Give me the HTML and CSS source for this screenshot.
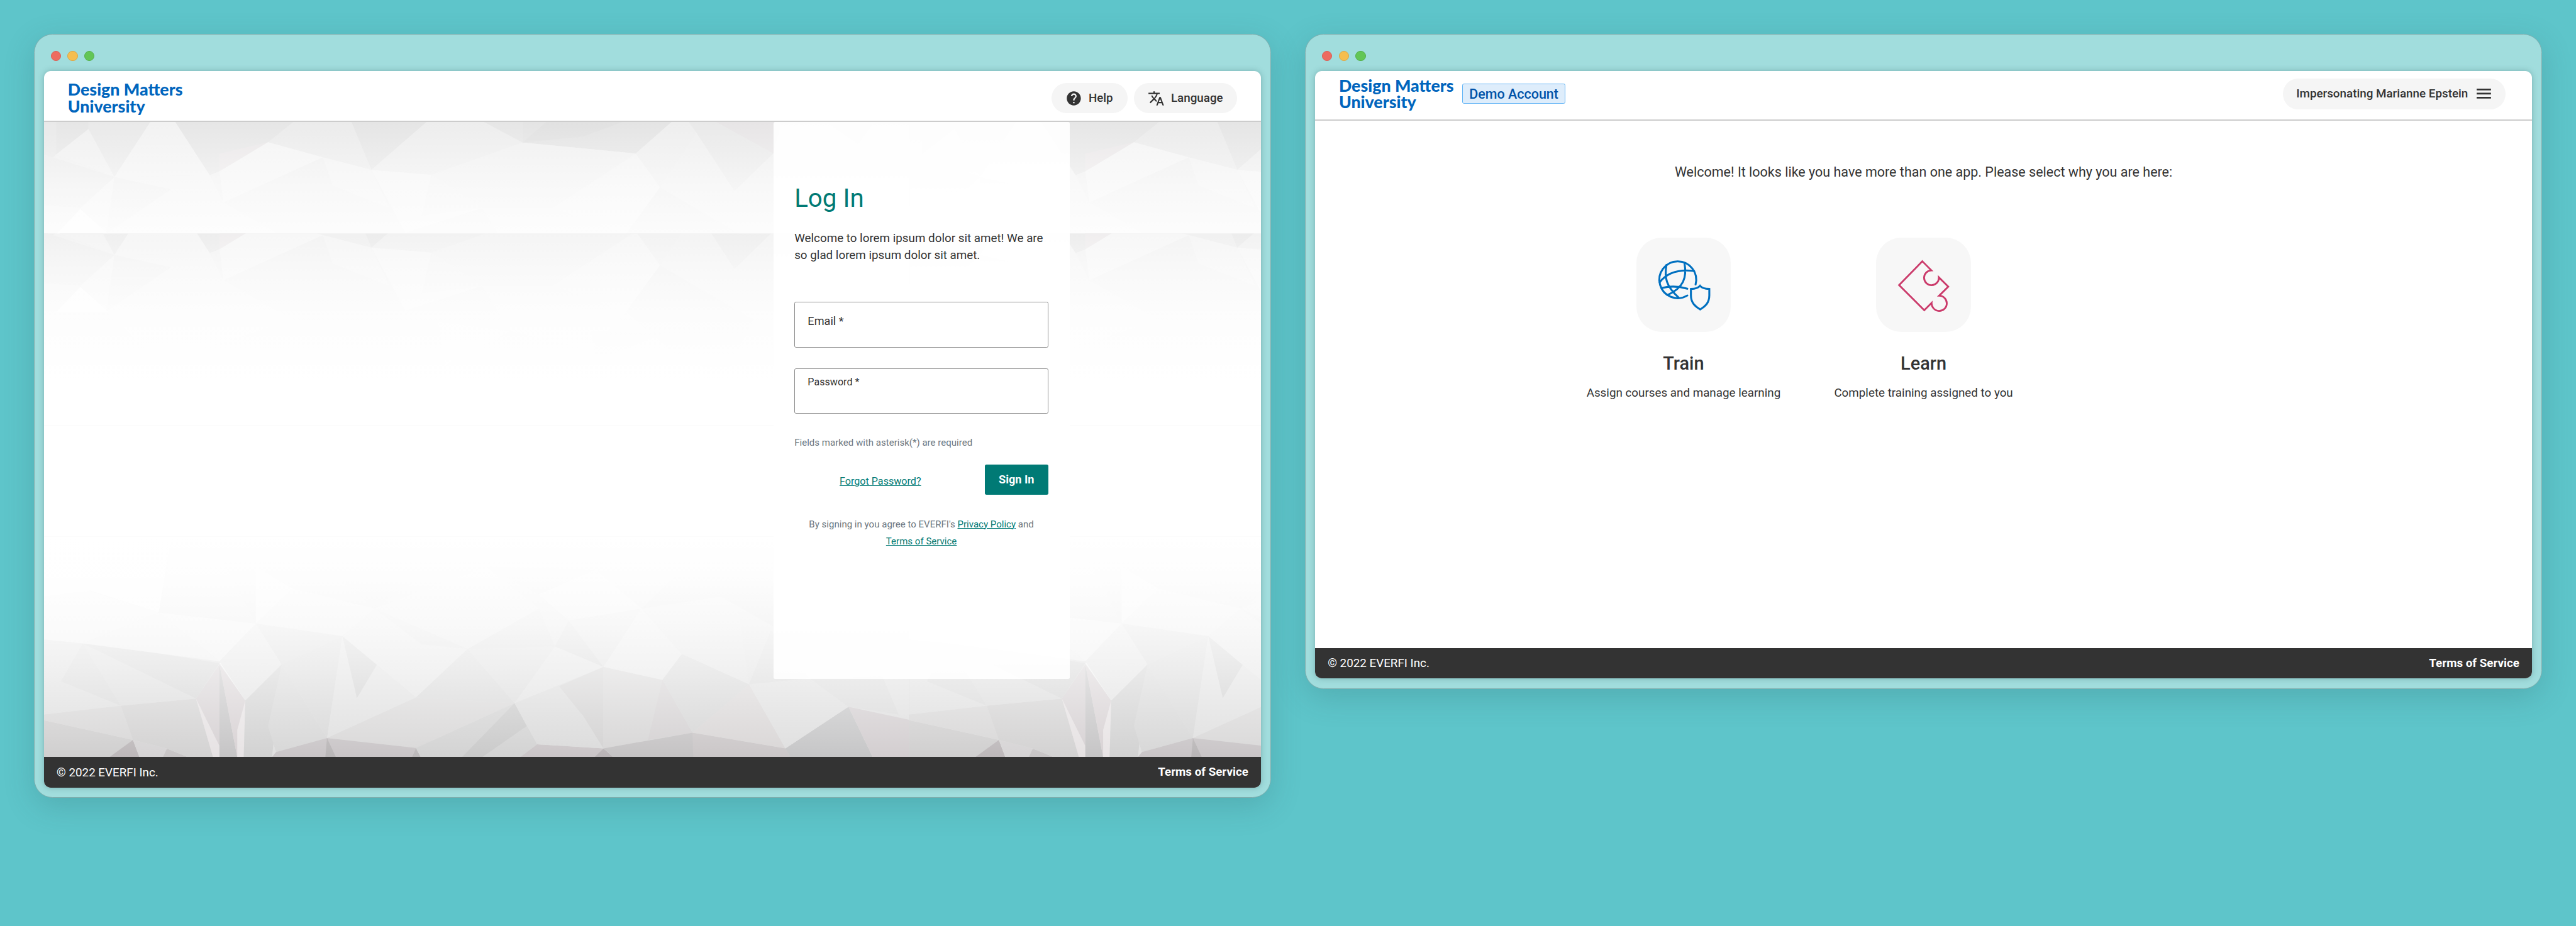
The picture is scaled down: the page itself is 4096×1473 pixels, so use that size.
FILE: index.html
```html
<!DOCTYPE html>
<html lang="en">
<head>
<meta charset="utf-8">
<title>Design Matters University</title>
<link rel="stylesheet" href="styles.css">
</head>
<body>
<div class="desk">
  <section class="window">
    <div class="dots"><i class="dot red"></i><i class="dot amber"></i><i class="dot green"></i></div>
    <div class="page page-login">
      <header class="header">
        <div class="logo">Design Matters<br>University</div>
        <nav class="actions">
          <a class="pill pill-help">
            <svg class="icon" viewBox="0 0 24 24"><path fill="#333" d="M12 2C6.48 2 2 6.48 2 12s4.480 10 10 10 10-4.480 10-10S17.520 2 12 2zm1 17h-2v-2h2v2zm2.070-7.750l-.9.920C13.450 12.900 13 13.500 13 15h-2v-.5c0-1.100.450-2.100 1.170-2.830l1.240-1.260c.370-.360.590-.860.590-1.410 0-1.100-.9-2-2-2s-2 .9-2 2H8c0-2.210 1.790-4 4-4s4 1.790 4 4c0 .880-.360 1.680-.930 2.250z"/></svg>
            <span>Help</span>
          </a>
          <a class="pill pill-lang">
            <svg class="icon" viewBox="0 0 24 24"><path fill="#333" d="M12.870 15.070l-2.540-2.510.030-.030c1.740-1.940 2.980-4.170 3.710-6.530H17V4h-7V2H8v2H1v1.990h11.170C11.500 7.920 10.440 9.750 9 11.350 8.070 10.320 7.300 9.190 6.690 8h-2c.730 1.630 1.730 3.170 2.980 4.560l-5.090 5.020L4 19l5-5 3.110 3.110.760-2.040zM18.500 10h-2L12 22h2l1.120-3h4.750L21 22h2l-4.500-12zm-2.620 7l1.620-4.330L19.120 17h-3.240z"/></svg>
            <span>Language</span>
          </a>
        </nav>
      </header>
      <main class="stage">
        <svg class="backdrop" viewBox="0 0 2880 1504" preserveAspectRatio="none">
          <defs>
            <linearGradient id="fadeTop" gradientUnits="userSpaceOnUse" x1="0" y1="60" x2="0" y2="1250">
              <stop offset="0" stop-color="#fff" stop-opacity="0"/>
              <stop offset=".16" stop-color="#fff" stop-opacity=".3"/>
              <stop offset=".3" stop-color="#fff" stop-opacity=".58"/>
              <stop offset=".5" stop-color="#fff" stop-opacity=".85"/>
              <stop offset=".8" stop-color="#fff" stop-opacity="1"/>
            </linearGradient>
            <linearGradient id="fadeBottom" gradientUnits="userSpaceOnUse" x1="0" y1="150" x2="0" y2="1254">
              <stop offset="0" stop-color="#fff" stop-opacity="1"/>
              <stop offset=".2" stop-color="#fff" stop-opacity=".94"/>
              <stop offset=".4" stop-color="#fff" stop-opacity=".78"/>
              <stop offset=".6" stop-color="#fff" stop-opacity=".54"/>
              <stop offset=".8" stop-color="#fff" stop-opacity=".26"/>
              <stop offset="1" stop-color="#fff" stop-opacity="0"/>
            </linearGradient>
            <clipPath id="clipUpper"><rect x="0" y="0" width="2000" height="656"/></clipPath>
            <clipPath id="clipLower"><rect x="0" y="243" width="2000" height="1100"/></clipPath>
            <g id="topTile">
              <rect x="23" y="60" width="1072" height="1200" fill="#f0f0f0"/>
              <path fill="#e9e9e9" d="M23 60H155L110 355 38 235 23 300z"/>
              <path fill="#e5e5e5" d="M38 60H78V100L38 235z"/>
              <path fill="#f2f2f2" d="M78 100L110 355 38 235z"/>
              <path fill="#f4f4f4" d="M155 60H185L228 345 110 355z"/>
              <path fill="#e4e4e4" d="M185 60H403L300 170 240 325 228 345z"/>
              <path fill="#eae6e7" d="M240 230L300 170 240 325z"/>
              <path fill="#ebebeb" d="M332 60H403L428 317 368 250 300 170z"/>
              <path fill="#e3e3e3" d="M403 60H497L428 317z"/>
              <path fill="#eee" d="M497 60H566L615 172 502 343 428 317z"/>
              <path fill="#e4e4e4" d="M566 60H615V172z"/>
              <path fill="#e2e2e2" d="M615 60H800L755 230 615 172z"/>
              <path fill="#dedede" d="M645 60H740L690 140 615 172z"/>
              <path fill="#f2f2f2" d="M615 172L755 230 652 520H565L502 343z"/>
              <path fill="#f6f6f6" d="M755 230L785 410 743 656 652 520z"/>
              <path fill="#efefef" d="M800 60H820L830 120 785 410 755 230z"/>
              <path fill="#e9e9e9" d="M820 60H853L925 230 877 430 830 120z"/>
              <path fill="#e6e3e4" d="M853 60H935L960 120 925 230z"/>
              <path fill="#ececec" d="M935 60H1095V235L1040 180 925 230z"/>
              <path fill="#e3e3e3" d="M990 60H1050L1030 180z"/>
              <path fill="#f7f7f7" d="M300 170L368 250 245 490 240 325z"/>
              <path fill="#f5f5f5" d="M368 250L428 317 450 520 380 400z"/>
              <path fill="#f7f7f7" d="M428 317L502 343 565 520 470 650z"/>
              <path fill="#f3f3f3" d="M502 343L490 560 565 520z"/>
              <path fill="#f4f4f4" d="M110 355L228 345 245 490 100 656 68 520z"/>
              <path fill="#eee" d="M110 355L180 420 100 656z"/>
              <path fill="#fff" d="M68 525L103 660 38 660z"/>
              <path fill="#ebebeb" d="M23 235L110 355 68 520 23 505z"/>
              <path fill="#f1f1f1" d="M785 410L877 430 820 660 743 656z"/>
              <path fill="#f5f5f5" d="M565 520H652L743 656 700 860 600 760z"/>
              <path fill="#f5f5f5" d="M245 490L330 700 245 820 160 900 100 656z"/>
              <path fill="#f6f6f6" d="M510 710L600 760 520 940z"/>
              <path fill="#e4e4e4" opacity=".5" d="M700 760L790 770 705 920z"/>
              <path fill="#e4e4e4" opacity=".4" d="M785 410L743 656 800 870 865 1000 900 700z"/>
              <rect x="23" y="60" width="1072" height="1200" fill="#ededed" opacity=".25"/>
              <rect x="23" y="60" width="1072" height="1200" fill="url(#fadeTop)"/>
            </g>
            <g id="bottomTile">
              <rect x="22" y="150" width="1073" height="1106" fill="#dfdfdf"/>
              <path fill="#d0cfcf" d="M22 1070L133 1170 105 1256H22z"/>
              <path fill="#bdb8ba" d="M133 1170L141 1256H104z"/>
              <path fill="#d6d4d5" d="M133 1170L175 1213 170 1256H141z"/>
              <path fill="#c8c5c6" d="M175 1213L201 1256H170z"/>
              <path fill="#d8d7d7" d="M22 1042L118 998 133 1170 22 1070z"/>
              <path fill="#d3d2d2" d="M118 998L211 962 232 1256H201L175 1213 133 1170z"/>
              <path fill="#d6d1d3" d="M211 962L240 790V1256H232z"/>
              <path fill="#e6e2e3" d="M211 962L240 1200V1256H232z"/>
              <path fill="#c6c5c6" d="M240 790L262 1256H240z"/>
              <path fill="#d8d2d4" d="M240 790L272 972 268 1256H262z"/>
              <path fill="#e8e4e5" d="M262 1120L272 972 270 1256H262z"/>
              <path fill="#f2f2f2" d="M240 785L252 785 272 972z"/>
              <path fill="#d2d2d2" d="M272 972L317 790 305 1256H270z"/>
              <path fill="#d7d7d7" d="M317 790L373 1160 310 1230 300 1100z"/>
              <path fill="#d8d8d8" d="M317 790L392 648 373 1160z"/>
              <path fill="#e0e0e0" d="M392 648L483 957 373 1160z"/>
              <path fill="#d1d1d1" d="M392 648L435 790 410 960z"/>
              <path fill="#d9d8d8" d="M483 957L605 985 483 1210 373 1160z"/>
              <path fill="#c9c5c7" d="M373 1160L483 1210 478 1256H305L310 1230z"/>
              <path fill="#b9b6b7" d="M373 1160L384 1256H371z"/>
              <path fill="#bcb9ba" d="M483 1210L489 1256H478z"/>
              <path fill="#d3d3d3" d="M605 985L633 1192 612 1256H489L483 1210z"/>
              <path fill="#cacaca" d="M605 985L620 1100 565 1256H540z"/>
              <path fill="#cbc6c8" d="M633 1192L715 1212 705 1256H612z"/>
              <path fill="#b9b4b6" d="M715 1212L727 1256H704z"/>
              <path fill="#dbdbdb" d="M605 985L715 803V1212L633 1192z"/>
              <path fill="#d3d2d2" d="M660 900L715 803V1212L690 1050z"/>
              <path fill="#d7d6d6" d="M715 803L788 868 825 1133 715 1212z"/>
              <path fill="#d4d1d2" d="M788 868L825 1133 770 1170z"/>
              <path fill="#c5c3c4" d="M825 1133L940 1212 946 1256H727L715 1212z"/>
              <path fill="#cbc7c8" d="M825 1133L940 1212 946 1256H826z"/>
              <path fill="#d9d6d6" d="M895 890L940 1212 825 1133z"/>
              <path fill="#c6c6c7" d="M1018 1003L1048 1256H946L940 1212z"/>
              <path fill="#d3ced0" d="M1018 1003L1095 1070V1256H1048z"/>
              <path fill="#dfdfdf" d="M895 890L970 860 1018 1003 940 1212z"/>
              <path fill="#dbdbdb" d="M970 860L1060 850 1080 1042 1018 1003z"/>
              <path fill="#e0e0e0" d="M1060 850L1095 810V1050L1080 1042z"/>
              <path fill="#dfdfdf" d="M22 820L44 875 118 998 22 1042z"/>
              <path fill="#d9d9d9" d="M71 685L118 998 44 875z"/>
              <path fill="#dcdcdc" d="M71 685L165 735 211 962 118 998z"/>
              <path fill="#d5d5d5" d="M71 685L165 735 240 785 211 962z"/>
              <path fill="#ececec" d="M165 530L240 775 71 685z"/>
              <path fill="#e3e3e3" d="M240 775L317 790 272 972z"/>
              <path fill="#e3e3e3" d="M285 585L317 790 240 775z"/>
              <path fill="#eee" d="M165 530L285 585 240 775z"/>
              <path fill="#dadada" d="M285 585L392 648 317 790z"/>
              <path fill="#e4e4e4" d="M432 510L547 713 483 957 392 648z"/>
              <path fill="#dedede" d="M432 510L547 713 490 690z"/>
              <path fill="#d8d8d8" d="M547 713L605 985 483 957z"/>
              <path fill="#dcdcdc" d="M547 713L655 700 605 985z"/>
              <path fill="#e2e2e2" d="M655 700L715 803 605 985z"/>
              <path fill="#d6d6d6" d="M655 700L672 570 715 803z"/>
              <path fill="#d9d9d9" d="M635 510L655 700 547 713z"/>
              <path fill="#dedede" d="M672 570L762 510 715 803z"/>
              <path fill="#e6e6e6" d="M762 510L812 738 788 868 715 803z"/>
              <path fill="#d6d6d6" d="M812 738L895 890 825 1133 788 868z"/>
              <path fill="#e1e1e1" d="M762 510L880 460 895 890 812 738z"/>
              <path fill="#d9d9d9" d="M895 890L922 620 970 860z"/>
              <path fill="#e4e4e4" d="M432 510L570 300 635 510 547 713z"/>
              <path fill="#d8d8d8" d="M570 300L705 315 635 440z"/>
              <path fill="#e8e8e8" d="M705 315L762 510 672 570 635 440z"/>
              <path fill="#d6d6d6" d="M762 510L805 340 925 360V600L860 450z"/>
              <path fill="#eee" d="M22 350L165 530 71 685 22 665z"/>
              <path fill="#e8e8e8" d="M285 585L330 410 432 510 392 648z"/>
              <path fill="#dcdcdc" d="M390 370L480 380 432 510z"/>
              <path fill="#f6f6f6" d="M22 150H180L165 530 80 420 22 450z"/>
              <path fill="#e2e2e2" d="M180 245L240 240 285 585 165 530z"/>
              <path fill="#efefef" d="M285 300L330 410 285 585z"/>
              <rect x="22" y="150" width="1073" height="1106" fill="url(#fadeBottom)"/>
            </g>
          </defs>
          <rect width="2880" height="1504" fill="#fff"/>
          <g transform="translate(-44 -28) scale(1.9132 .4464)">
            <g clip-path="url(#clipUpper)"><use href="#topTile"/><use href="#topTile" x="1071"/></g>
            <g transform="translate(0 413)"><g clip-path="url(#clipLower)"><use href="#topTile"/><use href="#topTile" x="1071"/></g></g>
          </g>
          <g transform="translate(-44 912) scale(1.9132 .4719)"><use href="#bottomTile"/><use href="#bottomTile" x="1071"/></g>
        </svg>
        <form class="panel">
          <h1 class="heading">Log In</h1>
          <p class="intro">Welcome to lorem ipsum dolor sit amet! We are<br>so glad lorem ipsum dolor sit amet.</p>
          <label class="field email">Email *</label>
          <label class="field password">Password *</label>
          <p class="note">Fields marked with asterisk(*) are required</p>
          <div class="submit-row">
            <a class="link forgot">Forgot Password?</a>
            <button class="submit" type="button">Sign In</button>
          </div>
          <p class="legal">By signing in you agree to EVERFI's <a class="link">Privacy Policy</a> and<br><a class="link">Terms of Service</a></p>
        </form>
      </main>
      <footer class="footer"><span>© 2022 EVERFI Inc.</span><b>Terms of Service</b></footer>
    </div>
  </section>

  <section class="window">
    <div class="dots"><i class="dot red"></i><i class="dot amber"></i><i class="dot green"></i></div>
    <div class="page page-apps">
      <header class="header header-compact">
        <div class="logo">Design Matters<br>University</div>
        <span class="badge">Demo Account</span>
        <nav class="actions">
          <a class="pill pill-user">
            <span>Impersonating Marianne Epstein</span>
            <svg class="menu" viewBox="0 0 34 24"><path fill="#333" d="M0 0h34v4H0zM0 9.700h34v4H0zM0 19.400h34v4H0z"/></svg>
          </a>
        </nav>
      </header>
      <main class="apps">
        <p class="welcome">Welcome! It looks like you have more than one app. Please select why you are here:</p>
        <div class="cards">
          <a class="card">
            <span class="tile">
              <svg viewBox="0 0 224 224" fill="none" stroke="#0070c0" stroke-width="4.600" stroke-linecap="round" stroke-linejoin="round">
                <path d="M140 111A43.600 43.600 0 1 0 120.500 137"/>
                <path d="M113.700 60C120 95 112 118 73.500 136M71 65C66 95 70 115 100 142M55 105.700C75 80 105 75 136.600 79M61 119Q90 112 120.500 121"/>
                <path stroke-linejoin="miter" d="M150.500 114Q145 121 129 121.500V137C129 155 140 163.500 151 170 162 163.500 172.500 155 172.500 137V121.500Q156 121 150.500 114z"/>
              </svg>
            </span>
            <strong class="card-title">Train</strong>
            <span class="card-text">Assign courses and manage learning</span>
          </a>
          <a class="card">
            <span class="tile">
              <svg viewBox="0 0 224 224" fill="none" stroke="#cb3b6b" stroke-width="4.200">
                <path d="M109.600 56L131 77.500A17.500 17.500 0 1 0 148.700 94L171 116 149.300 137.500A18 18 0 1 1 131.500 154.500L114.200 172 54.500 112.300z"/>
              </svg>
            </span>
            <strong class="card-title">Learn</strong>
            <span class="card-text">Complete training assigned to you</span>
          </a>
        </div>
      </main>
      <footer class="footer"><span>© 2022 EVERFI Inc.</span><b>Terms of Service</b></footer>
    </div>
  </section>
</div>
</body>
</html>
```
FILE: styles.css
```css
/* 1rem is 100 design units on the 6096-unit wide canvas */
html { font-size: 67.192px; }
* { box-sizing: border-box; }
body {
  margin: 0;
  width: 4096px;
  height: 1473px;
  overflow: hidden;
  background: #5ec5ca;
  color: #333;
  font-family: Roboto, "Liberation Sans", sans-serif;
}
p, h1 { margin: 0; font-weight: 400; }
.desk { display: flex; align-items: flex-start; gap: .8rem; padding: .805rem .8rem 0; }
.window {
  width: 29.28rem;
  padding: 0 .225rem .225rem;
  border: .02rem solid #80adad;
  border-radius: .44rem;
  background: #a1dddd;
  box-shadow: 0 .2rem .7rem rgba(40, 90, 95, .22);
}
.dots { display: flex; gap: .16rem; height: .865rem; padding: .385rem 0 0 .16rem; }
.dot { width: .24rem; height: .24rem; border-radius: 50%; border: .02rem solid; }
.red { background: #ed6b60; border-color: #d85f55; }
.amber { background: #f5be4f; border-color: #d9a648; }
.green { background: #62c656; border-color: #55ae4b; }
.page {
  display: flex;
  flex-direction: column;
  overflow: hidden;
  border-radius: .16rem;
  background: #fff;
  box-shadow: 0 0 .14rem rgba(40, 90, 95, .35);
}
.page-login { height: 16.96rem; }
.page-apps { height: 14.38rem; }

.header {
  display: flex;
  align-items: flex-start;
  flex: none;
  height: 1.21rem;
  padding: .24rem .57rem 0 .565rem;
  border-bottom: .03rem solid #ccc;
}
.header-compact { height: 1.18rem; padding-top: .14rem; }
.logo { color: #0065bd; font: 900 .398rem/.39rem Lato, sans-serif; }
.actions { display: flex; gap: .16rem; margin: .04rem 0 0 auto; }
.header-compact .actions { margin-right: .05rem; }
.pill {
  display: flex;
  align-items: center;
  height: .72rem;
  border-radius: .36rem;
  background: #f5f5f5;
  font-size: .28rem;
  font-weight: 500;
}
.icon { width: .4rem; height: .4rem; }
.pill-help { width: 1.79rem; padding-left: .32rem; gap: .15rem; }
.pill-lang { width: 2.43rem; padding-left: .32rem; gap: .15rem; }
.pill-user { width: 5.28rem; padding: 0 .35rem 0 .32rem; justify-content: space-between; }
.menu { width: .34rem; height: .24rem; }
.badge {
  display: flex;
  align-items: center;
  justify-content: center;
  width: 2.44rem;
  height: .48rem;
  margin: .155rem 0 0 .2rem;
  border: .02rem solid #64b5f6;
  border-radius: .04rem;
  background: #deedfb;
  color: #0052a8;
  font-size: .32rem;
  font-weight: 500;
}

.stage { position: relative; flex: 1; overflow: hidden; }
.backdrop { position: absolute; inset: 0; width: 100%; height: 100%; }
.panel {
  position: relative;
  width: 7.01rem;
  height: 13.18rem;
  margin-left: 17.26rem;
  padding: 1.435rem .5rem 0;
  border-radius: .04rem;
  background: rgba(255, 255, 255, .9);
}
.heading { color: #007a75; font-size: .6rem; line-height: .73rem; }
.intro { margin-top: .385rem; font-size: .28rem; line-height: .4rem; white-space: nowrap; }
.field {
  display: block;
  height: 1.08rem;
  padding-left: .3rem;
  border: .02rem solid #8c8c8c;
  border-radius: .04rem;
  background: #fff;
  line-height: .4rem;
}
.email { margin-top: .9rem; padding-top: .26rem; font-size: .27rem; }
.password { margin-top: .49rem; padding-top: .13rem; font-size: .24rem; }
.note { margin-top: .54rem; color: #6c7780; font-size: .224rem; line-height: .32rem; white-space: nowrap; }
.link { color: #007a75; text-decoration: underline; text-underline-offset: .02rem; text-decoration-thickness: .02rem; }
.submit-row { display: flex; justify-content: space-between; margin-top: .34rem; }
.forgot { margin: .21rem 0 0 1.07rem; font-size: .24rem; line-height: .4rem; }
.submit {
  width: 1.51rem;
  height: .72rem;
  padding: 0;
  border: 0;
  border-radius: .04rem;
  background: #007a75;
  color: #fff;
  font: 700 .27rem/.72rem Roboto, sans-serif;
}
.legal { margin-top: .5rem; color: #6c7780; font-size: .224rem; line-height: .4rem; text-align: center; white-space: nowrap; }

.footer {
  display: flex;
  align-items: center;
  justify-content: space-between;
  flex: none;
  height: .72rem;
  padding: 0 .3rem;
  background: #333;
  color: #fff;
  font-size: .28rem;
}
.footer b { padding-bottom: .02rem; }

.apps { flex: 1; padding-top: .98rem; }
.welcome { font-size: .32rem; line-height: .48rem; text-align: center; }
.cards { display: grid; grid-template-columns: repeat(3, 5.68rem); justify-content: center; margin-top: 1.3rem; }
.card { display: flex; flex-direction: column; align-items: center; }
.tile { width: 2.24rem; height: 2.24rem; border-radius: .6rem; background: #f7f7f7; }
.tile svg { display: block; width: 100%; height: 100%; }
.card-title { margin-top: .47rem; font-size: .43rem; font-weight: 500; line-height: .56rem; }
.card-text { margin-top: .22rem; font-size: .28rem; line-height: .4rem; }
```
